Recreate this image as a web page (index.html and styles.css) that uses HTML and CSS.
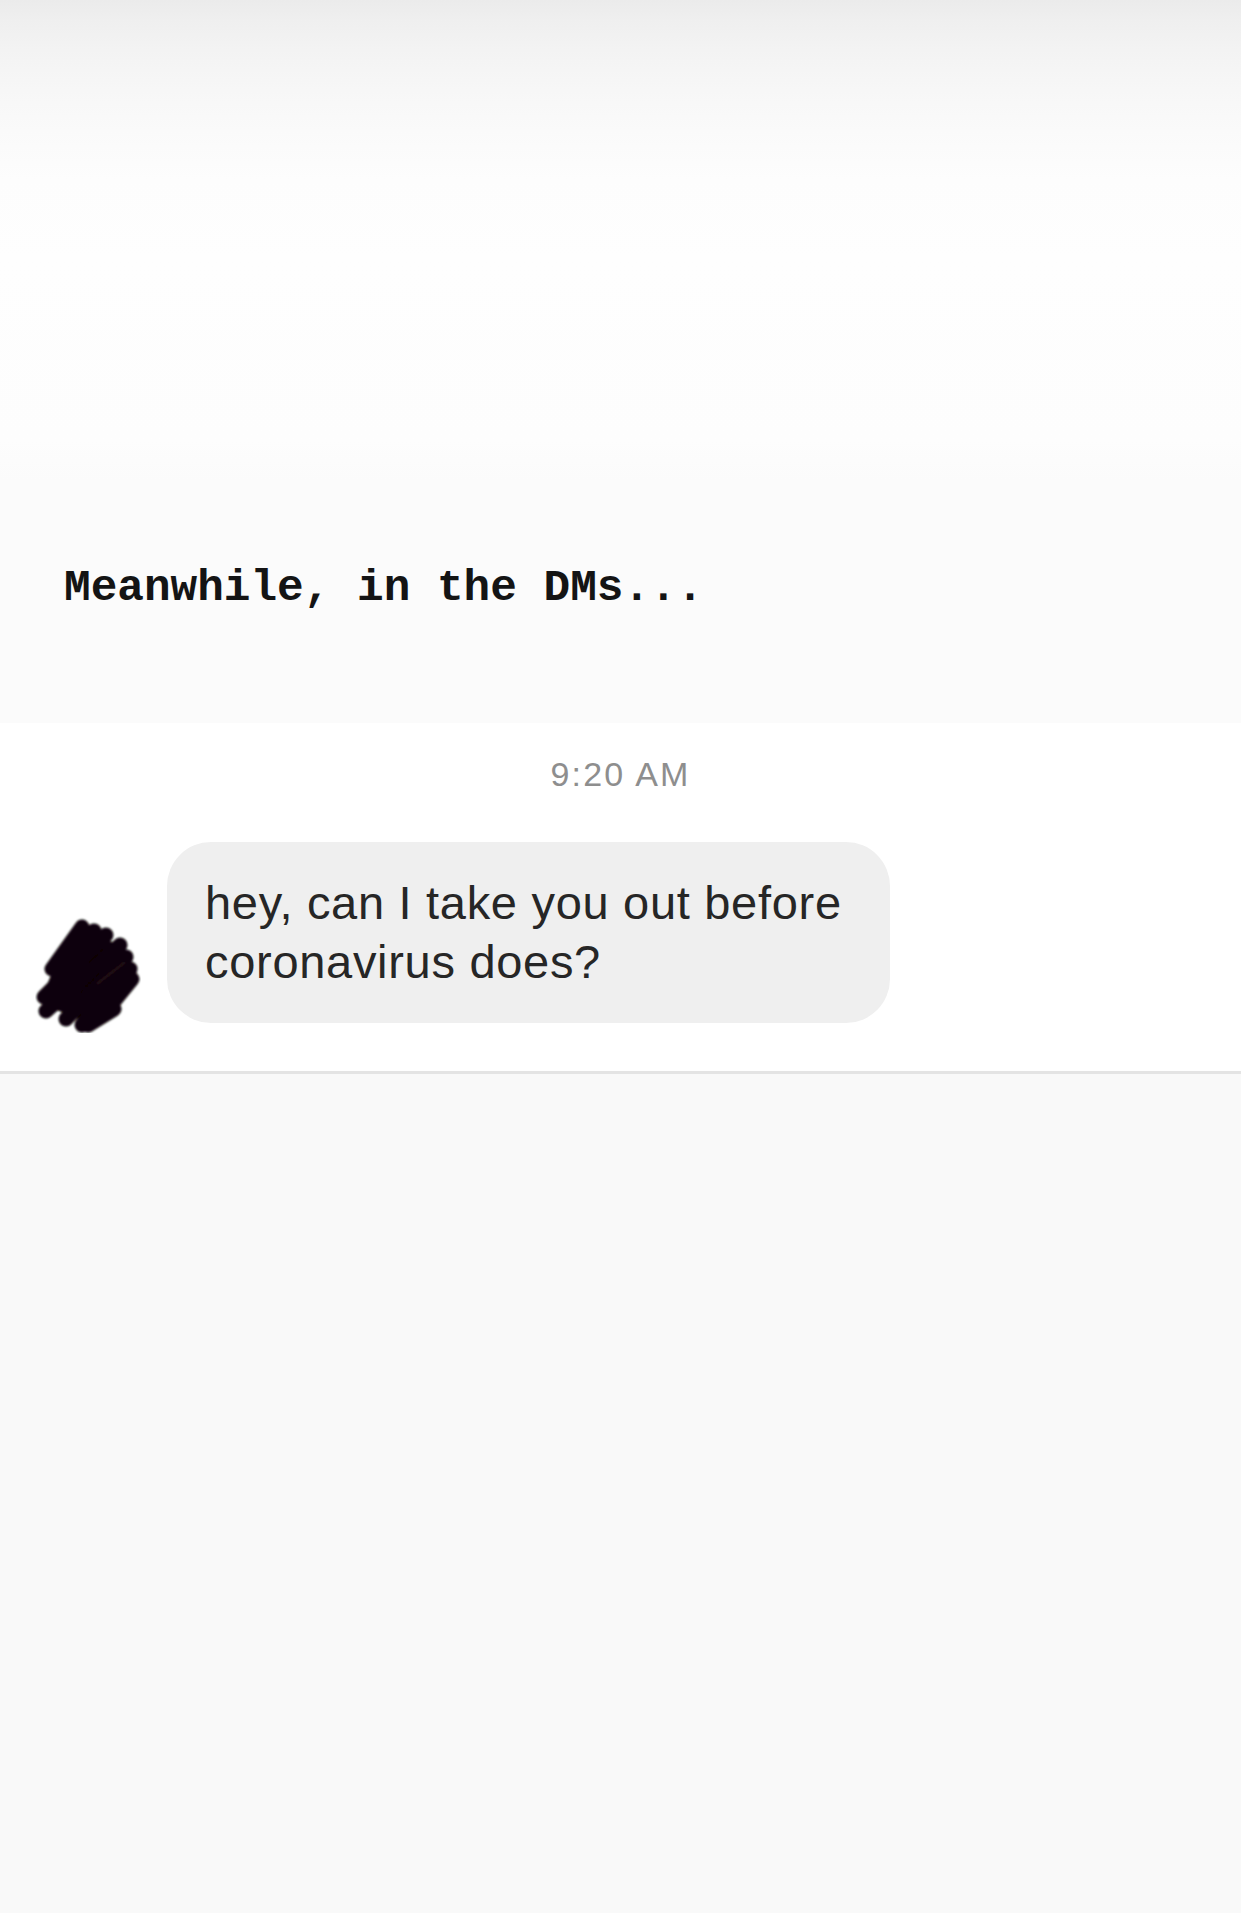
FILE: index.html
```html
<!DOCTYPE html>
<html lang="en">
<head>
<meta charset="utf-8">
<title>Meanwhile, in the DMs...</title>
<link rel="stylesheet" href="styles.css">
</head>
<body>
  <div class="page">
    <section class="intro">
      <p class="caption">Meanwhile, in the DMs...</p>
    </section>
    <section class="thread">
      <div class="time">9:20 AM</div>
      <div class="row">
        <svg class="avatar" width="137" height="122" viewBox="0 0 137 122" aria-hidden="true">
          <defs>
            <filter id="soft" x="-10%" y="-10%" width="120%" height="120%">
              <feGaussianBlur stdDeviation="0.9"/>
            </filter>
          </defs>
          <g filter="url(#soft)">
            <polygon points="24,56 50,20 76,26 96,44 100,66 82,98 54,110 24,98 14,82" fill="#0b0607"/>
            <path d="M22,58 L52,16 M26,74 L64,20 M14,86 L76,24 M16,100 L90,34 M36,108 L96,46 M52,114 L100,58 M76,100 L102,68 M58,114 L84,98"
                  stroke="#0b0607" stroke-width="15" stroke-linecap="round" fill="none"/>
            <path d="M68,72 L94,52" stroke="#3a1a22" stroke-width="2" stroke-linecap="round" opacity="0.6"/>
          </g>
        </svg>
        <div class="bubble">hey, can I take you out before coronavirus does?</div>
      </div>
    </section>
    <section class="rest"></section>
  </div>
</body>
</html>
```

FILE: styles.css
```css
html, body {
  margin: 0;
  padding: 0;
}

body {
  background: #f9f9f9;
  font-family: "Liberation Sans", Arial, sans-serif;
}

.page {
  display: flex;
  flex-direction: column;
  min-height: 1913px;
}

.intro {
  box-sizing: border-box;
  height: 723px;
  padding: 566px 0 0 64px;
  background: linear-gradient(to bottom,
    #ebebeb 0px,
    #efefef 20px,
    #f3f3f3 50px,
    #f7f7f7 90px,
    #fafafa 130px,
    #fdfdfd 180px,
    #fefefe 260px,
    #fdfdfd 440px,
    #fbfbfb 480px,
    #fbfbfb 723px);
}

.caption {
  margin: 0;
  font-family: "Liberation Mono", "Courier New", monospace;
  font-weight: bold;
  font-size: 44.4px;
  line-height: 45px;
  color: #141414;
  white-space: nowrap;
}

.thread {
  background: #ffffff;
  padding: 31px 0 48px 0;
  border-bottom: 3px solid #e4e4e4;
  box-shadow: 0 2px 3px rgba(0, 0, 0, 0.03);
}

.time {
  text-align: center;
  font-size: 34px;
  line-height: 40px;
  letter-spacing: 2.2px;
  color: #8e8e8e;
}

.row {
  display: flex;
  align-items: flex-end;
  margin-top: 48px;
  padding-left: 30px;
}

.avatar {
  flex: none;
  display: block;
  margin-bottom: -10px;
}

.bubble {
  box-sizing: border-box;
  width: 723px;
  padding: 31px 40px 32px 38px;
  background: #efefef;
  border-radius: 44px;
  font-size: 47px;
  line-height: 59px;
  letter-spacing: 0.7px;
  color: #262626;
}

.rest {
  flex: 1;
  background: #f9f9f9;
}
```
